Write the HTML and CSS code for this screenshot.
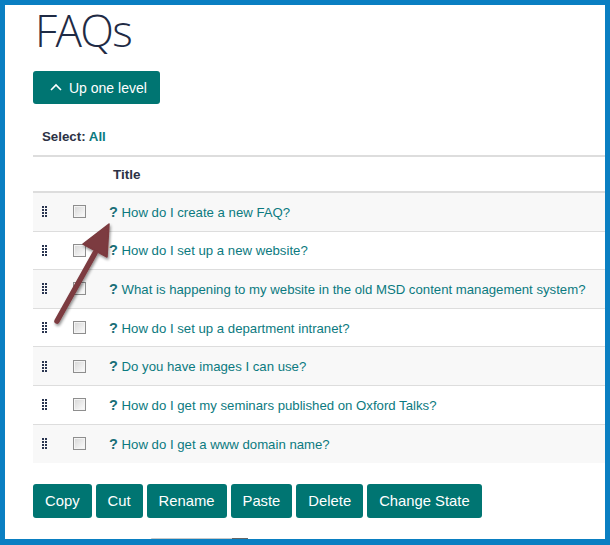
FILE: index.html
```html
<!DOCTYPE html>
<html>
<head>
<meta charset="utf-8">
<link rel="stylesheet" href="styles.css">
</head>
<body>
<div class="frame">
  <div class="content">
    <h1 class="title">FAQs</h1>
    <button class="btn up-btn">
      <svg class="chev" width="12" height="8" viewBox="0 0 12 8"><path d="M1 7 L6 2 L11 7" fill="none" stroke="#fff" stroke-width="1.6"/></svg>
      Up one level
    </button>
    <div class="select-line"><span class="select-label">Select:</span> <a class="select-all">All</a></div>
    <div class="table">
      <div class="thead"><div class="c-handle"></div><div class="c-check"></div><div class="c-title">Title</div></div>
      <div class="row shaded"><div class="c-handle"><svg class="grip" width="6" height="11" viewBox="0 0 6 11"><g fill="#2a3550"><rect x="0" y="0" width="2" height="2"/><rect x="3" y="0" width="2" height="2"/><rect x="0" y="3" width="2" height="2"/><rect x="3" y="3" width="2" height="2"/><rect x="0" y="6" width="2" height="2"/><rect x="3" y="6" width="2" height="2"/><rect x="0" y="9" width="2" height="2"/><rect x="3" y="9" width="2" height="2"/></g></svg></div><div class="c-check"><span class="cb"></span></div><div class="c-title"><span class="q">?</span> <a>How do I create a new FAQ?</a></div></div>
      <div class="row"><div class="c-handle"><svg class="grip" width="6" height="11" viewBox="0 0 6 11"><g fill="#2a3550"><rect x="0" y="0" width="2" height="2"/><rect x="3" y="0" width="2" height="2"/><rect x="0" y="3" width="2" height="2"/><rect x="3" y="3" width="2" height="2"/><rect x="0" y="6" width="2" height="2"/><rect x="3" y="6" width="2" height="2"/><rect x="0" y="9" width="2" height="2"/><rect x="3" y="9" width="2" height="2"/></g></svg></div><div class="c-check"><span class="cb"></span></div><div class="c-title"><span class="q">?</span> <a>How do I set up a new website?</a></div></div>
      <div class="row shaded"><div class="c-handle"><svg class="grip" width="6" height="11" viewBox="0 0 6 11"><g fill="#2a3550"><rect x="0" y="0" width="2" height="2"/><rect x="3" y="0" width="2" height="2"/><rect x="0" y="3" width="2" height="2"/><rect x="3" y="3" width="2" height="2"/><rect x="0" y="6" width="2" height="2"/><rect x="3" y="6" width="2" height="2"/><rect x="0" y="9" width="2" height="2"/><rect x="3" y="9" width="2" height="2"/></g></svg></div><div class="c-check"><span class="cb"></span></div><div class="c-title"><span class="q">?</span> <a>What is happening to my website in the old MSD content management system?</a></div></div>
      <div class="row"><div class="c-handle"><svg class="grip" width="6" height="11" viewBox="0 0 6 11"><g fill="#2a3550"><rect x="0" y="0" width="2" height="2"/><rect x="3" y="0" width="2" height="2"/><rect x="0" y="3" width="2" height="2"/><rect x="3" y="3" width="2" height="2"/><rect x="0" y="6" width="2" height="2"/><rect x="3" y="6" width="2" height="2"/><rect x="0" y="9" width="2" height="2"/><rect x="3" y="9" width="2" height="2"/></g></svg></div><div class="c-check"><span class="cb"></span></div><div class="c-title"><span class="q">?</span> <a>How do I set up a department intranet?</a></div></div>
      <div class="row shaded"><div class="c-handle"><svg class="grip" width="6" height="11" viewBox="0 0 6 11"><g fill="#2a3550"><rect x="0" y="0" width="2" height="2"/><rect x="3" y="0" width="2" height="2"/><rect x="0" y="3" width="2" height="2"/><rect x="3" y="3" width="2" height="2"/><rect x="0" y="6" width="2" height="2"/><rect x="3" y="6" width="2" height="2"/><rect x="0" y="9" width="2" height="2"/><rect x="3" y="9" width="2" height="2"/></g></svg></div><div class="c-check"><span class="cb"></span></div><div class="c-title"><span class="q">?</span> <a>Do you have images I can use?</a></div></div>
      <div class="row"><div class="c-handle"><svg class="grip" width="6" height="11" viewBox="0 0 6 11"><g fill="#2a3550"><rect x="0" y="0" width="2" height="2"/><rect x="3" y="0" width="2" height="2"/><rect x="0" y="3" width="2" height="2"/><rect x="3" y="3" width="2" height="2"/><rect x="0" y="6" width="2" height="2"/><rect x="3" y="6" width="2" height="2"/><rect x="0" y="9" width="2" height="2"/><rect x="3" y="9" width="2" height="2"/></g></svg></div><div class="c-check"><span class="cb"></span></div><div class="c-title"><span class="q">?</span> <a>How do I get my seminars published on Oxford Talks?</a></div></div>
      <div class="row shaded"><div class="c-handle"><svg class="grip" width="6" height="11" viewBox="0 0 6 11"><g fill="#2a3550"><rect x="0" y="0" width="2" height="2"/><rect x="3" y="0" width="2" height="2"/><rect x="0" y="3" width="2" height="2"/><rect x="3" y="3" width="2" height="2"/><rect x="0" y="6" width="2" height="2"/><rect x="3" y="6" width="2" height="2"/><rect x="0" y="9" width="2" height="2"/><rect x="3" y="9" width="2" height="2"/></g></svg></div><div class="c-check"><span class="cb"></span></div><div class="c-title"><span class="q">?</span> <a>How do I get a www domain name?</a></div></div>
    </div>
    <div class="actions">
      <button class="btn">Copy</button>
      <button class="btn">Cut</button>
      <button class="btn">Rename</button>
      <button class="btn">Paste</button>
      <button class="btn">Delete</button>
      <button class="btn">Change State</button>
    </div>
    <div class="peek"><span class="peek-arrow"></span></div>
  </div>
  <svg class="annot" width="90" height="120" viewBox="0 0 90 120">
    <defs>
      <filter id="sh" x="-30%" y="-30%" width="160%" height="160%">
        <feGaussianBlur in="SourceAlpha" stdDeviation="1.5"/>
        <feOffset dx="1" dy="2" result="b"/>
        <feComponentTransfer><feFuncA type="linear" slope="0.45"/></feComponentTransfer>
        <feMerge><feMergeNode/><feMergeNode in="SourceGraphic"/></feMerge>
      </filter>
    </defs>
    <g filter="url(#sh)">
      <line x1="17" y1="101" x2="55" y2="33" stroke="#7b3a3f" stroke-width="5.5" stroke-linecap="round"/>
      <path d="M69 4 L43 24 L67 37 Z" fill="#7b3a3f" stroke="#7b3a3f" stroke-width="1.5" stroke-linejoin="round"/>
    </g>
  </svg>
</div>
</body>
</html>
```
FILE: styles.css
```css
* { box-sizing: border-box; }
html, body { margin: 0; padding: 0; }
body { font-family: "Liberation Sans", Arial, sans-serif; background: #fff; }
.frame {
  position: relative;
  width: 610px;
  height: 545px;
  border: 5px solid #0a7fc2;
  border-bottom-width: 6px;
  overflow: hidden;
  background: #fff;
}
.content { padding-left: 28px; }
.title {
  margin: 0;
  padding-left: 2px;
  height: 61px;
  font-family: "Open Sans", "Lato", sans-serif;
  font-weight: 300;
  font-size: 44px;
  line-height: 50px;
  letter-spacing: -1.6px;
  color: #1f2b45;
}
.btn {
  display: inline-flex;
  align-items: center;
  height: 34px;
  padding: 0 12px;
  border: 0;
  border-radius: 3px;
  background: #007572;
  color: #fff;
  font-family: "Liberation Sans", Arial, sans-serif;
  font-size: 14.8px;
  cursor: pointer;
}
.up-btn {
  height: 33px;
  width: 127px;
  padding: 0 0 0 17px;
  margin-top: 5px;
  font-size: 14px;
}
.chev { margin-right: 7px; margin-top: -1px; }
.select-line {
  margin-top: 25px;
  padding-left: 9px;
  font-size: 13.3px;
  font-weight: bold;
  line-height: 16px;
  color: #2c3245;
}
.select-all { color: #0b7a80; }
.table { margin-top: 10px; }
.thead {
  display: flex;
  align-items: center;
  height: 38px;
  border-top: 2px solid #dddddd;
  border-bottom: 2px solid #dddddd;
}
.thead .c-title { font-weight: bold; font-size: 13.5px; color: #2c3245; padding-left: 4px; }
.row {
  display: flex;
  align-items: center;
  height: 38.6px;
  border-bottom: 1px solid #dddddd;
  font-size: 13.2px;
}
.row:last-child { border-bottom: 0; height: 38px; }
.row.shaded { background: #f8f8f8; }
.c-handle { flex: 0 0 40px; padding-left: 9px; display: flex; align-items: center; }
.c-check { flex: 0 0 36px; display: flex; align-items: center; }
.c-title { flex: 1 1 auto; white-space: nowrap; }
.grip { display: block; }
.cb {
  display: block;
  width: 13px;
  height: 13px;
  border: 1px solid #8e8e8e;
  background: linear-gradient(135deg, #d6d6d6, #fdfdfd);
  box-shadow: inset 0 0 0 1px #f4f4f4;
}
.q { color: #1a6f78; font-weight: bold; font-size: 14.5px; }
.c-title a { color: #0b7a80; }
.actions {
  display: flex;
  gap: 4px;
  margin-top: 21px;
}
.peek {
  position: relative;
  margin-top: 20px;
  margin-left: 118px;
  width: 97px;
  height: 20px;
  border-top: 1px solid #c8c8c8;
  border-left: 1px solid #e0e0e0;
}
.peek-arrow {
  position: absolute;
  right: 0;
  top: -1px;
  width: 16px;
  height: 20px;
  background: #666;
}
.annot {
  position: absolute;
  left: 35px;
  top: 215px;
}
```
